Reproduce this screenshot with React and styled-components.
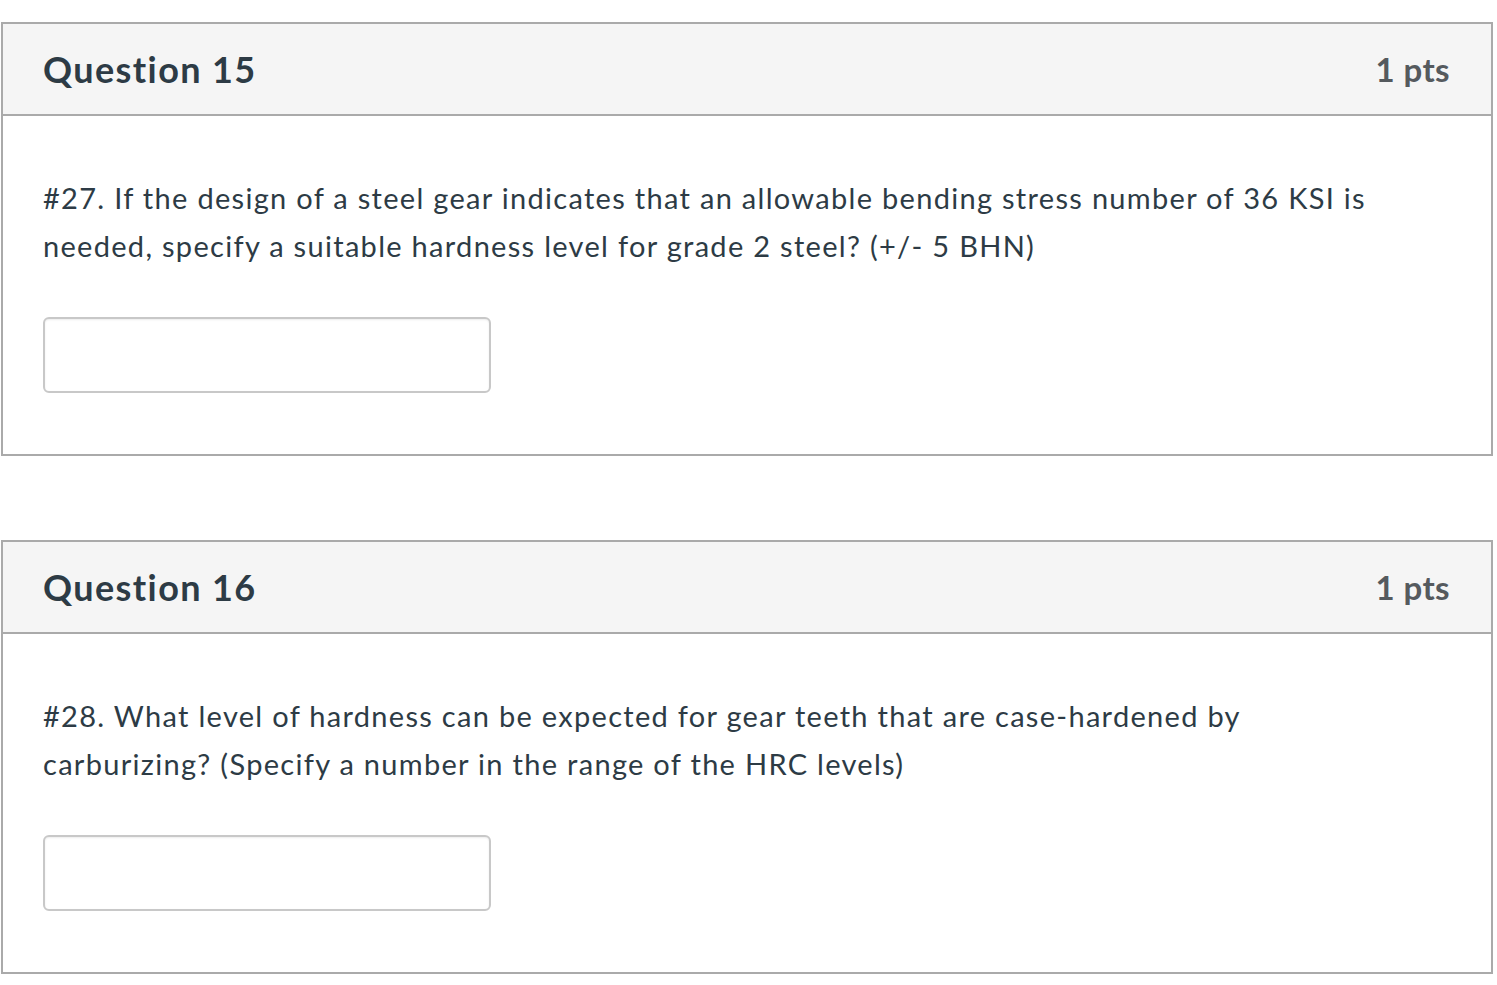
import React from 'react';
import styled, { createGlobalStyle } from 'styled-components';

const GlobalStyle = createGlobalStyle`
  html, body {
    margin: 0;
    padding: 0;
    background: #fff;
  }
  body {
    font-family: Lato, "Liberation Sans", sans-serif;
    color: #2d3b45;
  }
`;

const Page = styled.div`
  display: flex;
  flex-direction: column;
  gap: 84px;
  padding: 22px 4px 12px 1px;
`;

const Card = styled.section`
  border: 2px solid #aaaaaa;
  background: #fff;
`;

const Header = styled.header`
  display: flex;
  align-items: center;
  justify-content: space-between;
  height: 90px;
  padding: 0 41px 0 40px;
  background: #f5f5f5;
  border-bottom: 2px solid #aaaaaa;
`;

const Title = styled.h2`
  margin: 0;
  font-size: 36px;
  font-weight: 700;
  color: #2d3b45;
  letter-spacing: 1.4px;
`;

const Points = styled.span`
  font-size: 33px;
  font-weight: 700;
  color: #555a5e;
  letter-spacing: 0.4px;
`;

const Body = styled.div`
  padding: 58px 40px 61px 40px;
`;

const Text = styled.p`
  margin: 0 0 47px 0;
  font-size: 29px;
  line-height: 48px;
  letter-spacing: 1.3px;
  color: #2d3b45;
`;

const Answer = styled.input`
  display: block;
  box-sizing: border-box;
  width: 448px;
  height: 76px;
  margin: 0;
  border: 2px solid #c8c8c8;
  border-radius: 6px;
  box-shadow: inset 0 1px 2px rgba(0, 0, 0, 0.08);
  background: #fff;
  font-family: inherit;
  font-size: 28px;
  padding: 0 14px;
  outline: none;
`;

const questions = [
  {
    id: 15,
    lines: [
      '#27. If the design of a steel gear indicates that an allowable bending stress number of 36 KSI is',
      'needed, specify a suitable hardness level for grade 2 steel? (+/- 5 BHN)',
    ],
  },
  {
    id: 16,
    lines: [
      '#28. What level of hardness can be expected for gear teeth that are case-hardened by',
      'carburizing? (Specify a number in the range of the HRC levels)',
    ],
  },
];

const Question = ({ id, lines }) => (
  <Card>
    <Header>
      <Title>Question {id}</Title>
      <Points>1 pts</Points>
    </Header>
    <Body>
      <Text>
        {lines[0]}
        <br />
        {lines[1]}
      </Text>
      <Answer type="text" aria-label={`Answer for question ${id}`} />
    </Body>
  </Card>
);

const App = () => (
  <>
    <GlobalStyle />
    <Page>
      {questions.map(q => (
        <Question key={q.id} id={q.id} lines={q.lines} />
      ))}
    </Page>
  </>
);

export default App;
